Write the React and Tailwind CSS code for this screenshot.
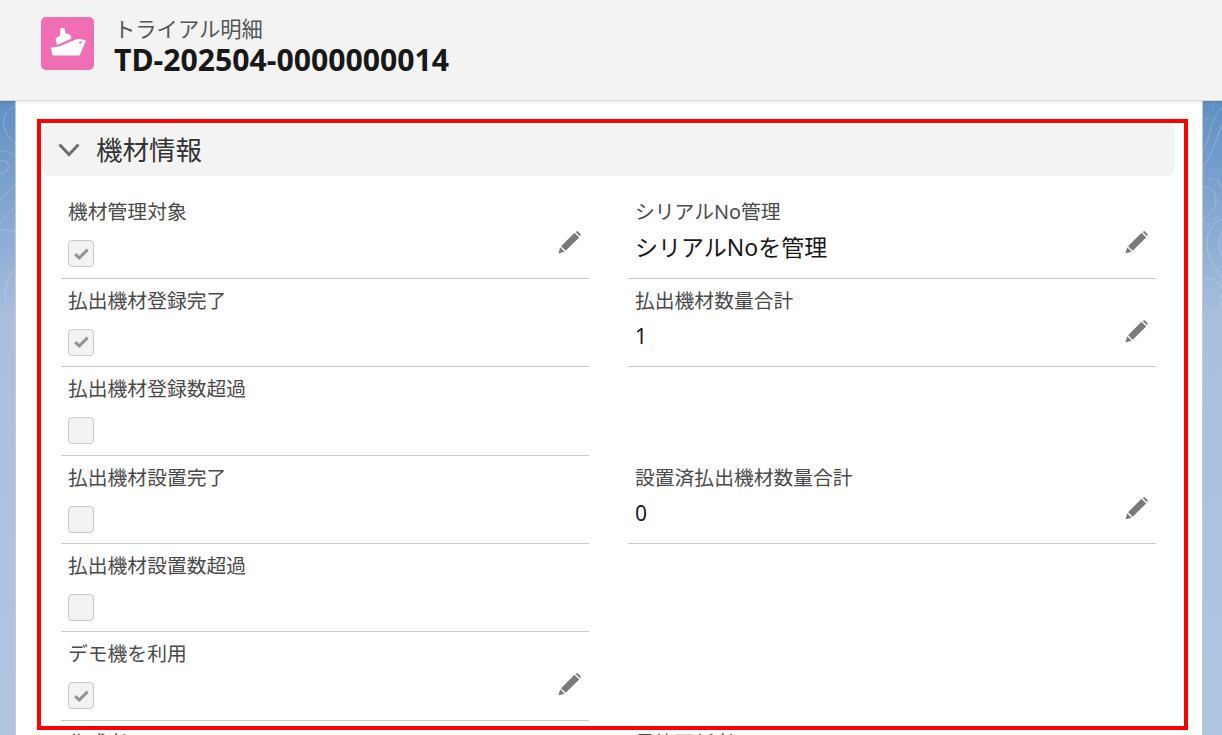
import React from "react";

const rows = [
  [
    { label: "機材管理対象", checked: true, edit: true },
    { label: "シリアルNo管理", value: "シリアルNoを管理", large: true, edit: true },
  ],
  [
    { label: "払出機材登録完了", checked: true },
    { label: "払出機材数量合計", value: "1", edit: true },
  ],
  [{ label: "払出機材登録数超過", checked: false }, null],
  [
    { label: "払出機材設置完了", checked: false },
    { label: "設置済払出機材数量合計", value: "0", edit: true },
  ],
  [{ label: "払出機材設置数超過", checked: false }, null],
  [{ label: "デモ機を利用", checked: true, edit: true }, null],
  [{ label: "作成者", plain: true }, { label: "最終更新者", plain: true }],
];

const Pencil = () => (
  <svg width="23" height="23" viewBox="0 0 24 24" className="block">
    <path d="M17.2 1.9 22.1 6.8 8 20.6 3.2 15.8Z" fill="#7a7a7a" />
    <path d="M18.4 1 19.3.4C19.8.1 20.4.1 20.9.5L23.4 3C23.8 3.5 23.8 4.1 23.5 4.6L22.9 5.5Z" fill="#7a7a7a" />
    <path d="M2.3 16.9 6.9 21.6 1 23.3C.6 23.4.5 23.2.6 22.9Z" fill="#7a7a7a" />
  </svg>
);

const Checkbox = ({ checked }) => (
  <div className="w-[26px] h-[27px] flex items-center justify-center rounded-[4px] border border-[#c9c9c9] bg-[#f3f3f3]">
    {checked && (
      <svg width="15" height="12" viewBox="0 0 15 12">
        <path d="M1.2 6.2 5.2 10 13.6 1.6" fill="none" stroke="#969492" strokeWidth="3" />
      </svg>
    )}
  </div>
);

const Field = ({ field }) => {
  if (!field) return <div className="h-[88.4px]" />;
  return (
    <div className="h-[88.4px] flex justify-between border-b border-[#c9c9c9] pl-[7px] pr-[8px]">
      <div>
        <div className="mt-[10px] h-[24px] leading-[24px] text-[19.8px] text-[#4a4a4a]">{field.label}</div>
        {field.value && (
          <div className={`mt-[8px] h-[30px] leading-[30px] text-[#181818] ${field.large ? "text-[23px]" : "text-[21px]"}`}>
            {field.value}
          </div>
        )}
        {field.checked !== undefined && (
          <div className="mt-[16px]">
            <Checkbox checked={field.checked} />
          </div>
        )}
      </div>
      {field.edit && (
        <div className="mt-[41px]">
          <Pencil />
        </div>
      )}
    </div>
  );
};

const LeftContours = () => (
  <svg width="15" height="634" viewBox="0 0 15 634" fill="none" stroke="#ffffff" strokeOpacity="0.22" className="block">
    <path d="M15 5C6 8 2 18 4 26S10 38 15 41" />
    <path d="M0 50C6 49 11 51 15 56" />
    <path d="M0 60C6 58 9 62 8 67S3 72 0 72" />
    <path d="M0 100C4 94 10 88 15 84" />
    <path d="M0 122C5 116 10 110 15 106" />
    <path d="M0 130C6 128 10 129 15 131" />
    <path d="M6 200C3 188 8 176 15 166" />
  </svg>
);

const RightContours = () => (
  <svg width="19" height="634" viewBox="0 0 19 634" fill="none" stroke="#ffffff" strokeOpacity="0.22" className="block">
    <path d="M12 1 9 7" />
    <path d="M5 16 2 22" />
    <path d="M19 6C11 14 9 24 6 34S2 46 0 50" />
    <path d="M19 24C13 38 9 54 0 66" />
    <path d="M5 78H10" />
    <path d="M14 78 19 88" />
    <path d="M0 86C8 84 13 92 13 100S7 112 0 118" />
    <path d="M3 126 7 122" />
    <path d="M10 120 14 116" />
    <path d="M19 118C8 122 3 134 4 146S12 166 19 176" />
    <path d="M19 130C15 138 16 150 19 156" />
    <path d="M0 178C8 176 15 180 19 188" />
    <path d="M8 188C2 194 1 204 6 210S16 212 18 202 14 188 8 188Z" strokeOpacity="0.14" />
  </svg>
);

export default function App() {
  return (
    <div
      className="relative h-[735px] w-[1222px] overflow-hidden bg-[linear-gradient(#5f8fc3_100px,#a9bfdd_320px,#b0c5e0_735px)]"
      style={{ fontFamily: '"Noto Sans", "Noto Sans CJK JP", sans-serif' }}
    >
      <div className="relative z-10 h-[101px] flex items-start bg-[#f3f3f3] border-b border-[#d8d8d8] shadow-[0_1px_3px_rgba(0,0,0,0.12)] pl-[41px] pt-[17px]">
        <div className="w-[53px] h-[53px] rounded-[5px] bg-[#ef6eb4]">
          <svg width="53" height="53" viewBox="0 0 53 53" className="block">
            <path d="M14.5 21.5 19 18.5 19.5 11H23.5L24.5 16.5 29 17.5 30.5 21.5 16 28Z" fill="#ffffff" />
            <path d="M10 30.5 18 29.5 35 22.5C38 21.6 41.5 22 45 23.5L39 37.5C38.6 38.4 38 38.6 37 38.6H13C12 38.6 11.4 38 11.2 37Z" fill="#ffffff" />
            <circle cx="39.5" cy="25.5" r="1.2" fill="#ef6eb4" />
          </svg>
        </div>
        <div className="ml-[20px] flex flex-col">
          <div className="-mt-[1px] h-[25px] leading-[25px] text-[21.3px] text-[#555555]">トライアル明細</div>
          <div className="mt-[3px] h-[32px] leading-[32px] text-[30.2px] font-bold text-[#181818]">TD-202504-0000000014</div>
        </div>
      </div>

      <div className="flex h-[634px]">
        <div className="w-[15px] shrink-0">
          <LeftContours />
        </div>
        <div className="w-[1188px] shrink-0 bg-white border-x border-[#c5c9d0] pl-[26px] pr-[27px] pt-[23px]">
          <div className="h-[52px] flex items-center rounded-[8px] bg-[#f3f3f3] pl-[16px]">
            <svg width="22" height="14" viewBox="0 0 22 14" fill="none">
              <path d="M1.5 1.5 11 11.5 20.5 1.5" stroke="#706e6b" strokeWidth="3" />
            </svg>
            <span className="ml-[16px] mt-[2px] text-[26.5px] text-[#333333]">機材情報</span>
          </div>
          <div className="mt-[14.4px] mx-[19px] grid grid-cols-[528px_528px] gap-x-[39px]">
            {rows.map((row, i) => (
              <React.Fragment key={i}>
                <Field field={row[0]} />
                <Field field={row[1]} />
              </React.Fragment>
            ))}
          </div>
        </div>
        <div className="flex-1">
          <RightContours />
        </div>
      </div>

      {/* red highlight from the screenshot */}
      <div className="absolute z-20 left-[37px] top-[119px] w-[1151px] h-[611px] border-[4px] border-[#ff0000] pointer-events-none" />
    </div>
  );
}
